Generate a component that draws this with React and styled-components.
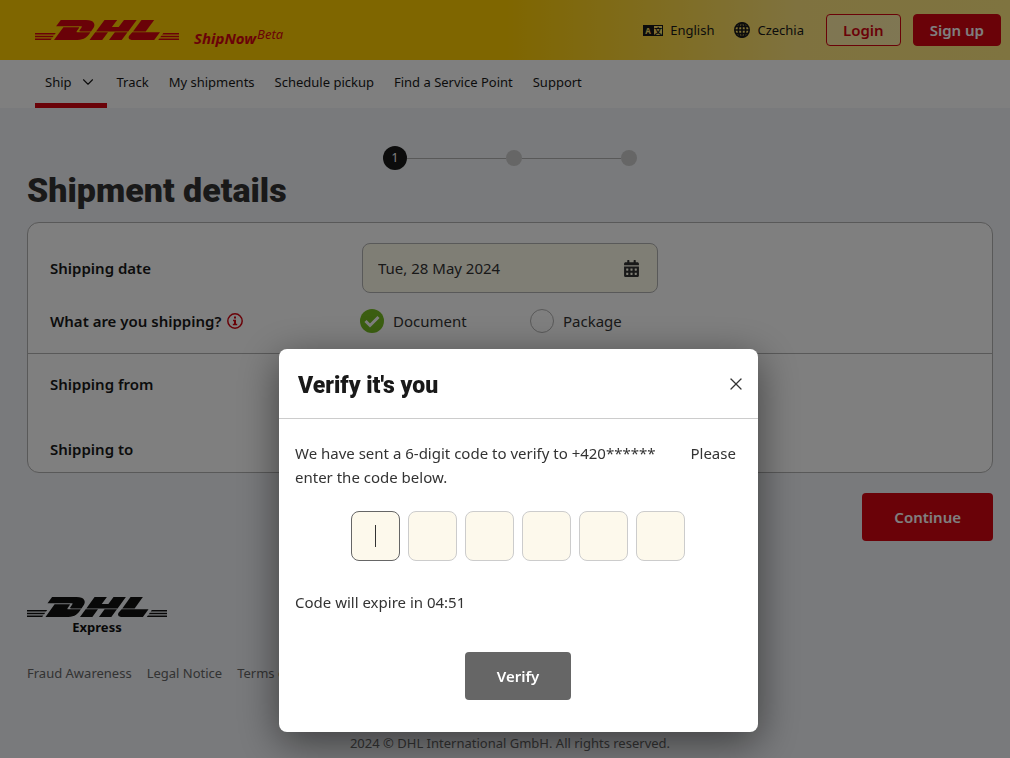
import React, { useState } from "react";
import styled, { createGlobalStyle } from "styled-components";
import { FaCalendarAlt } from "react-icons/fa";
import { ChevronDown, X } from "lucide-react";

const navLinks = [
  "Track",
  "My shipments",
  "Schedule pickup",
  "Find a Service Point",
  "Support",
];

const footerLinks = ["Fraud Awareness", "Legal Notice", "Terms of Use"];

const DhlLogo = ({ width, color }) => (
  <LogoSvg width={width} height="20" viewBox="0 0 144 20" preserveAspectRatio="none" fill={color} aria-hidden="true">
    {/* speed lines */}
    <path d="M0 13h20.8l-1.2 1.6H0zM0 15.7h18.8l-1.2 1.6H0zM0 18.4h16.8L15.6 20H0z" />
    <path d="M128.4 13H144v1.6h-16.8zM126.4 15.7H144v1.6h-18.8zM124.4 18.4H144V20h-20.8z" />
    {/* D */}
    <path d="M25.8 0H51c8.4 0 9.6 4.6 7.6 7.8L56 11.4H45.6c-2 0-1.3-.8-.8-1.5l1.7-2.3c.6-.8.6-1.3-.7-1.3H21.1z" />
    <path d="M28.4 7.2h14.8c1.2 0 1.1.4.6 1.1l-1.9 2.6c-.4.5-.9 1.4.9 1.4h12.6C53 16.6 49 20 42.500 20H19z" />
    {/* H */}
    <path d="M69.5 0h12.7l-5.3 7.1h6.8L89 0h12.7l-8.5 11.4H61z" />
    <path d="M60.3 12.3H73L67.2 20H54.5zM79.8 12.3h12.7L86.7 20H74z" />
    {/* L */}
    <path d="M106.5 0h12.7l-8.5 11.4H98z" />
    <path d="M97.3 12.3H125L119.200 20H98c-4.500 0-5.200-2.400-3.600-4.500z" />
  </LogoSvg>
);

const LanguageIcon = () => (
  <svg width="20" height="11" viewBox="0 0 20 11" aria-hidden="true">
    <rect width="20" height="11" fill="#191919" />
    <rect x="11" y="1" width="8" height="9" fill="#ffe066" />
    <text x="5" y="8.5" fontSize="8" fontWeight="700" textAnchor="middle" fill="#ffe066">
      A
    </text>
    <text x="15" y="8.5" fontSize="8" fontWeight="700" fontFamily="Noto Sans CJK SC, sans-serif" textAnchor="middle" fill="#191919">
      文
    </text>
  </svg>
);

const GlobeIcon = () => (
  <svg width="16" height="16" viewBox="0 0 16 16" fill="none" stroke="#191919" strokeWidth="1.6" aria-hidden="true">
    <circle cx="8" cy="8" r="7.2" />
    <ellipse cx="8" cy="8" rx="3.7" ry="7.2" />
    <path d="M8 1v14M1 8h14M2 4.4h12M2 11.6h12" />
  </svg>
);

const InfoIcon = () => (
  <svg width="16" height="16" viewBox="0 0 16 16" fill="none" aria-hidden="true">
    <circle cx="8" cy="8" r="7.2" stroke="#d40511" strokeWidth="1.5" />
    <path d="M7 3.6h2v2H7zM6 6.8h3v4h1.2v1.4H5.8v-1.4H7V8.2H6z" fill="#d40511" />
  </svg>
);

const App = () => {
  const [shipmentType, setShipmentType] = useState("document");
  const [code, setCode] = useState(["", "", "", "", "", ""]);
  const [open, setOpen] = useState(true);

  const changeDigit = (index, value) => {
    setCode(code.map((digit, i) => (i === index ? value.slice(-1) : digit)));
  };

  return (
    <Page>
      <GlobalStyle />
      <Header>
        <Brand href="#" aria-label="DHL ShipNow Beta">
          <DhlLogo width={144} color="#d40511" />
          <Product>
            ShipNow <Beta>Beta</Beta>
          </Product>
        </Brand>
        <HeaderActions>
          <HeaderLink href="#">
            <LanguageIcon />
            English
          </HeaderLink>
          <HeaderLink href="#">
            <GlobeIcon />
            Czechia
          </HeaderLink>
          <HeaderButtons>
            <HeaderButton $outline>Login</HeaderButton>
            <HeaderButton>Sign up</HeaderButton>
          </HeaderButtons>
        </HeaderActions>
      </Header>

      <Nav>
        <NavLink href="#" $active>
          Ship
          <ChevronDown size={18} strokeWidth={1.5} />
        </NavLink>
        {navLinks.map((link) => (
          <NavLink href="#" key={link}>
            {link}
          </NavLink>
        ))}
      </Nav>

      <Main>
        <Stepper>
          <CurrentStep>1</CurrentStep>
          <StepLine />
          <StepDot />
          <StepLine />
          <StepDot />
        </Stepper>
        <Title>Shipment details</Title>

        <Card>
          <Section>
            <Row>
              <Label as="label" htmlFor="shipping-date">
                Shipping date
              </Label>
              <DateField>
                <DateInput id="shipping-date" defaultValue="Tue, 28 May 2024" />
                <FaCalendarAlt size={17} />
              </DateField>
            </Row>
            <TypeRow>
              <Label>
                What are you shipping? <InfoIcon />
              </Label>
              <Options>
                {["document", "package"].map((type) => (
                  <Option key={type}>
                    <Radio
                      type="radio"
                      name="shipment-type"
                      checked={shipmentType === type}
                      onChange={() => setShipmentType(type)}
                    />
                    <RadioMark $checked={shipmentType === type}>
                      {shipmentType === type && (
                        <svg width="24" height="24" viewBox="0 0 24 24" fill="none">
                          <path d="M5.5 12l4.5 4.5L18.500 8" stroke="#fff" strokeWidth="3" />
                        </svg>
                      )}
                    </RadioMark>
                    {type === "document" ? "Document" : "Package"}
                  </Option>
                ))}
              </Options>
            </TypeRow>
          </Section>
          <Addresses>
            <Label>Shipping from</Label>
            <Label>Shipping to</Label>
          </Addresses>
        </Card>
        <Actions>
          <Button>Continue</Button>
        </Actions>
      </Main>

      <Footer>
        <ExpressBrand>
          <DhlLogo width={140} color="#111" />
          Express
        </ExpressBrand>
        <FooterLinks>
          {footerLinks.map((link) => (
            <FooterLink href="#" key={link}>
              {link}
            </FooterLink>
          ))}
        </FooterLinks>
        <Copyright>2024 © DHL International GmbH. All rights reserved.</Copyright>
      </Footer>

      {open && (
        <Overlay>
          <Dialog role="dialog" aria-modal="true" aria-labelledby="verify-title">
            <DialogHeader>
              <DialogTitle id="verify-title">Verify it's you</DialogTitle>
              <CloseButton aria-label="Close" onClick={() => setOpen(false)}>
                <X size={20} strokeWidth={1.5} />
              </CloseButton>
            </DialogHeader>
            <DialogBody>
              <Message>
                We have sent a 6-digit code to verify to +420******
                <HiddenDigits /> Please enter the code below.
              </Message>
              <CodeInputs>
                {code.map((digit, index) => (
                  <CodeInput
                    key={index}
                    aria-label={`Digit ${index + 1}`}
                    inputMode="numeric"
                    value={digit}
                    $current={index === code.findIndex((d) => !d)}
                    onChange={(e) => changeDigit(index, e.target.value)}
                  />
                ))}
              </CodeInputs>
              <Message>Code will expire in 04:51</Message>
              <VerifyButton>Verify</VerifyButton>
            </DialogBody>
          </Dialog>
        </Overlay>
      )}
    </Page>
  );
};

export default App;

// Styled Components
const GlobalStyle = createGlobalStyle`
  * {
    box-sizing: border-box;
  }

  body {
    margin: 0;
    background: #f2f4f8;
    color: #333;
    font-family: "Noto Sans", "Open Sans", sans-serif;
    font-size: 15px;
  }

  button, input {
    font: inherit;
  }
`;

const Page = styled.div`
  display: flex;
  flex-direction: column;
  height: 100vh;
  overflow: hidden;
`;

const LogoSvg = styled.svg`
  display: block;
`;

const Header = styled.header`
  display: flex;
  align-items: center;
  justify-content: space-between;
  flex: none;
  height: 60px;
  padding: 0 9px 0 35px;
  background: linear-gradient(90deg, #fc0 0%, #fc0 50%, #ffe57f 79%, #ffe880 100%);
`;

const Brand = styled.a`
  display: flex;
  align-items: center;
  gap: 15px;
  color: #d40511;
  text-decoration: none;
`;

const Product = styled.span`
  display: flex;
  gap: 1px;
  padding-top: 16px;
  font-size: 15px;
  font-style: italic;
  font-weight: 700;
  line-height: 20px;
`;

const Beta = styled.sup`
  font-size: 13px;
  font-weight: 400;
  line-height: 12px;
`;

const HeaderActions = styled.div`
  display: flex;
  align-items: center;
  gap: 20px;
`;

const HeaderLink = styled.a`
  display: flex;
  align-items: center;
  gap: 7px;
  color: #191919;
  font-size: 13px;
  text-decoration: none;
`;

const HeaderButtons = styled.div`
  display: flex;
  gap: 12px;
  padding-left: 2px;
`;

const Button = styled.button`
  height: 48px;
  padding: 0 32px;
  border: 0;
  border-radius: 4px;
  background: #d40511;
  color: #fff;
  font-weight: 600;
  cursor: pointer;
`;

const HeaderButton = styled(Button)`
  height: 32px;
  padding: 0 16px;
  border: 1px solid #d40511;
  background: ${(props) => (props.$outline ? "rgba(255, 255, 255, 0.3)" : "#d40511")};
  color: ${(props) => (props.$outline ? "#d40511" : "#fff")};
`;

const Nav = styled.nav`
  display: flex;
  flex: none;
  height: 48px;
  padding: 0 35px;
  background: #fff;
`;

const NavLink = styled.a`
  display: flex;
  align-items: center;
  gap: 7px;
  padding: 0 10px;
  border-bottom: 5px solid ${(props) => (props.$active ? "#d40511" : "transparent")};
  color: #191919;
  font-size: 13px;
  text-decoration: none;
`;

const Main = styled.main`
  padding: 38px 17px 0 27px;
`;

const Stepper = styled.div`
  display: flex;
  align-items: center;
  justify-content: center;
`;

const CurrentStep = styled.span`
  width: 24px;
  height: 24px;
  border-radius: 50%;
  background: #191919;
  color: #fff;
  font-size: 12px;
  line-height: 24px;
  text-align: center;
`;

const StepLine = styled.span`
  width: 99px;
  height: 1px;
  background: #b2b2b2;
`;

const StepDot = styled.span`
  width: 16px;
  height: 16px;
  border-radius: 50%;
  background: #ccc;
`;

const Title = styled.h1`
  margin: 0 0 12px;
  color: #333;
  font-family: Roboto, sans-serif;
  font-size: 34px;
  font-weight: 900;
  line-height: 40px;
`;

const Card = styled.section`
  border: 1px solid #b2b2b2;
  border-radius: 12px;
  background: #fff;
`;

const Section = styled.div`
  padding: 20px 22px;
  border-bottom: 1px solid #b2b2b2;
`;

const Row = styled.div`
  display: grid;
  grid-template-columns: 312px 1fr;
  align-items: center;
`;

const TypeRow = styled(Row)`
  grid-template-columns: 310px 1fr;
  margin-top: 16px;
`;

const Label = styled.div`
  display: flex;
  align-items: center;
  gap: 6px;
  color: #191919;
  font-weight: 600;
  line-height: 24px;
`;

const DateField = styled.div`
  display: flex;
  align-items: center;
  width: 296px;
  height: 50px;
  padding: 0 17px 0 15px;
  border: 1px solid #b2b2b2;
  border-radius: 8px;
  background: #fffceb;
`;

const DateInput = styled.input`
  flex: 1;
  min-width: 0;
  padding: 0;
  border: 0;
  outline: 0;
  background: transparent;
  color: #333;
`;

const Options = styled.div`
  display: grid;
  grid-template-columns: 170px 170px;
`;

const Option = styled.label`
  display: flex;
  align-items: center;
  gap: 9px;
`;

const Radio = styled.input`
  position: absolute;
  opacity: 0;
`;

const RadioMark = styled.span`
  width: 24px;
  height: 24px;
  border: ${(props) => (props.$checked ? "0" : "1px solid #b2b2b2")};
  border-radius: 50%;
  background: ${(props) => (props.$checked ? "#76bd22" : "#fff")};
`;

const Addresses = styled.div`
  display: flex;
  flex-direction: column;
  align-items: flex-start;
  gap: 41px;
  padding: 18px 22px 11px;
`;

const Actions = styled.div`
  display: flex;
  justify-content: flex-end;
  padding-top: 20px;
`;

const Footer = styled.footer`
  padding: 56px 17px 0 27px;
  font-size: 13px;
`;

const ExpressBrand = styled.div`
  width: 140px;
  color: #111;
  font-weight: 700;
  line-height: 20px;
  text-align: center;
`;

const FooterLinks = styled.nav`
  display: flex;
  gap: 15px;
  margin-top: 26px;
`;

const FooterLink = styled.a`
  color: #666;
  line-height: 20px;
  text-decoration: none;
`;

const Copyright = styled.p`
  margin: 50px 0 0;
  color: #666;
  line-height: 20px;
  text-align: center;
`;

const Overlay = styled.div`
  position: fixed;
  inset: 0;
  display: flex;
  align-items: flex-end;
  justify-content: center;
  padding: 0 0 26px 27px;
  background: rgba(0, 0, 0, 0.5);
`;

const Dialog = styled.div`
  width: 479px;
  border-radius: 8px;
  background: #fff;
  box-shadow: 0 10px 40px rgba(0, 0, 0, 0.5);
`;

const DialogHeader = styled.div`
  display: flex;
  align-items: center;
  justify-content: space-between;
  height: 70px;
  padding: 0 12px 0 19px;
  border-bottom: 1px solid #ccc;
`;

const DialogTitle = styled.h2`
  margin: 0;
  padding-top: 4px;
  color: #191919;
  font-family: Roboto, sans-serif;
  font-size: 23px;
  font-weight: 900;
`;

const CloseButton = styled.button`
  display: flex;
  padding: 0;
  border: 0;
  background: none;
  color: #333;
  cursor: pointer;
`;

const DialogBody = styled.div`
  padding: 22px 17px 32px 16px;
`;

const Message = styled.p`
  margin: 0;
  line-height: 24px;
`;

const HiddenDigits = styled.span`
  display: inline-block;
  width: 31px;
`;

const CodeInputs = styled.div`
  display: flex;
  justify-content: center;
  gap: 8px;
  margin: 22px 0 29px;
`;

const CodeInput = styled.input`
  width: 49px;
  height: 50px;
  padding: 0;
  border: 1px solid ${(props) => (props.$current ? "#666" : "#ccc")};
  border-radius: 8px;
  outline: 0;
  background: #fdf9ec;
  ${(props) =>
    props.$current &&
    "background: linear-gradient(#333, #333) center / 1px 22px no-repeat #fdf9ec;"}
  text-align: center;
  caret-color: transparent;
`;

const VerifyButton = styled(Button)`
  display: block;
  margin: 38px auto 0;
  background: #666;
`;
